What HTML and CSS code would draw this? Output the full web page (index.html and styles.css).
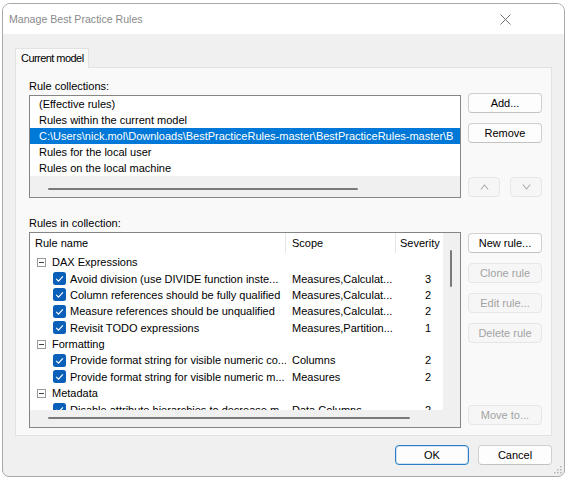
FILE: index.html
```html
<!DOCTYPE html>
<html>
<head>
<meta charset="utf-8">
<title>Manage Best Practice Rules</title>
<link rel="stylesheet" href="styles.css">
</head>
<body>
<div class="window">
  <div class="titlebar">
    <span class="title">Manage Best Practice Rules</span>
    <svg class="close" width="11" height="11" viewBox="0 0 11 11"><path d="M0.5 0.5L10.5 10.5M10.5 0.5L0.5 10.5" stroke="#707070" stroke-width="1" fill="none"/></svg>
  </div>
  <div class="client">
    <div class="tabs"><div class="tab">Current model</div></div>
    <div class="panel">
      <div class="section s1">
        <div class="col">
          <div class="label">Rule collections:</div>
          <div class="listbox">
            <div class="items">
              <div class="item">(Effective rules)</div>
              <div class="item">Rules within the current model</div>
              <div class="item sel">C:\Users\nick.mol\Downloads\BestPracticeRules-master\BestPracticeRules-master\B</div>
              <div class="item">Rules for the local user</div>
              <div class="item">Rules on the local machine</div>
            </div>
            <div class="hscroll"><div class="hthumb"></div></div>
          </div>
        </div>
        <div class="btns b1">
          <button class="btn">Add...</button>
          <button class="btn">Remove</button>
          <div class="arrows">
            <button class="btn" disabled><svg width="9" height="6" viewBox="0 0 9 6"><path d="M0.8 5.5L4.5 1L8.2 5.5" stroke="#a8a8a8" stroke-width="1.1" fill="none"/></svg></button>
            <button class="btn" disabled><svg width="9" height="6" viewBox="0 0 9 6"><path d="M0.8 0.5L4.5 5L8.2 0.5" stroke="#a8a8a8" stroke-width="1.1" fill="none"/></svg></button>
          </div>
        </div>
      </div>
      <div class="section s2">
        <div class="col">
          <div class="label">Rules in collection:</div>
          <div class="tree">
            <div class="tmain">
              <div class="tcontent">
                <div class="hdr">
                  <div class="hc c-name">Rule name</div>
                  <div class="hc c-scope">Scope</div>
                  <div class="hc c-sev">Severity</div>
                </div>
                <div class="rows">
                  <div class="trow group">
                    <svg class="exp" width="9" height="9" viewBox="0 0 9 9"><rect x="0.5" y="0.5" width="8" height="8" fill="#fff" stroke="#9a9a9a"/><path d="M2 4.5H7" stroke="#404040"/></svg>
                    <span class="gname">DAX Expressions</span>
                  </div>
                  <div class="trow rule">
                    <div class="c-name"><svg class="cb" width="13" height="13" viewBox="0 0 13 13"><rect width="13" height="13" rx="2.5" fill="#0a5fb8"/><path d="M3.2 6.8L5.5 9.1L9.9 4.4" stroke="#fff" stroke-width="1.2" fill="none"/></svg><span class="rname">Avoid division (use DIVIDE function inste...</span></div>
                    <div class="c-scope">Measures,Calculat...</div>
                    <div class="c-sev">3</div>
                  </div>
                  <div class="trow rule">
                    <div class="c-name"><svg class="cb" width="13" height="13" viewBox="0 0 13 13"><rect width="13" height="13" rx="2.5" fill="#0a5fb8"/><path d="M3.2 6.8L5.5 9.1L9.9 4.4" stroke="#fff" stroke-width="1.2" fill="none"/></svg><span class="rname">Column references should be fully qualified</span></div>
                    <div class="c-scope">Measures,Calculat...</div>
                    <div class="c-sev">2</div>
                  </div>
                  <div class="trow rule">
                    <div class="c-name"><svg class="cb" width="13" height="13" viewBox="0 0 13 13"><rect width="13" height="13" rx="2.5" fill="#0a5fb8"/><path d="M3.2 6.8L5.5 9.1L9.9 4.4" stroke="#fff" stroke-width="1.2" fill="none"/></svg><span class="rname">Measure references should be unqualified</span></div>
                    <div class="c-scope">Measures,Calculat...</div>
                    <div class="c-sev">2</div>
                  </div>
                  <div class="trow rule">
                    <div class="c-name"><svg class="cb" width="13" height="13" viewBox="0 0 13 13"><rect width="13" height="13" rx="2.5" fill="#0a5fb8"/><path d="M3.2 6.8L5.5 9.1L9.9 4.4" stroke="#fff" stroke-width="1.2" fill="none"/></svg><span class="rname">Revisit TODO expressions</span></div>
                    <div class="c-scope">Measures,Partition...</div>
                    <div class="c-sev">1</div>
                  </div>
                  <div class="trow group">
                    <svg class="exp" width="9" height="9" viewBox="0 0 9 9"><rect x="0.5" y="0.5" width="8" height="8" fill="#fff" stroke="#9a9a9a"/><path d="M2 4.5H7" stroke="#404040"/></svg>
                    <span class="gname">Formatting</span>
                  </div>
                  <div class="trow rule">
                    <div class="c-name"><svg class="cb" width="13" height="13" viewBox="0 0 13 13"><rect width="13" height="13" rx="2.5" fill="#0a5fb8"/><path d="M3.2 6.8L5.5 9.1L9.9 4.4" stroke="#fff" stroke-width="1.2" fill="none"/></svg><span class="rname">Provide format string for visible numeric co...</span></div>
                    <div class="c-scope">Columns</div>
                    <div class="c-sev">2</div>
                  </div>
                  <div class="trow rule">
                    <div class="c-name"><svg class="cb" width="13" height="13" viewBox="0 0 13 13"><rect width="13" height="13" rx="2.5" fill="#0a5fb8"/><path d="M3.2 6.8L5.5 9.1L9.9 4.4" stroke="#fff" stroke-width="1.2" fill="none"/></svg><span class="rname">Provide format string for visible numeric m...</span></div>
                    <div class="c-scope">Measures</div>
                    <div class="c-sev">2</div>
                  </div>
                  <div class="trow group">
                    <svg class="exp" width="9" height="9" viewBox="0 0 9 9"><rect x="0.5" y="0.5" width="8" height="8" fill="#fff" stroke="#9a9a9a"/><path d="M2 4.5H7" stroke="#404040"/></svg>
                    <span class="gname">Metadata</span>
                  </div>
                  <div class="trow rule">
                    <div class="c-name"><svg class="cb" width="13" height="13" viewBox="0 0 13 13"><rect width="13" height="13" rx="2.5" fill="#0a5fb8"/><path d="M3.2 6.8L5.5 9.1L9.9 4.4" stroke="#fff" stroke-width="1.2" fill="none"/></svg><span class="rname">Disable attribute hierarchies to decrease m...</span></div>
                    <div class="c-scope">Data Columns</div>
                    <div class="c-sev">2</div>
                  </div>
                </div>
              </div>
              <div class="vscroll"><div class="vthumb"></div></div>
            </div>
            <div class="hscroll2"><div class="hthumb2"></div></div>
          </div>
        </div>
        <div class="btns b2">
          <button class="btn">New rule...</button>
          <button class="btn" disabled>Clone rule</button>
          <button class="btn" disabled>Edit rule...</button>
          <button class="btn" disabled>Delete rule</button>
          <button class="btn move" disabled>Move to...</button>
        </div>
      </div>
    </div>
    <div class="footer">
      <button class="btn default">OK</button>
      <button class="btn">Cancel</button>
    </div>
  </div>
  <svg class="grip" width="8" height="8" viewBox="0 0 8 8"><g fill="#b4b4b4"><rect x="6" y="0" width="1.5" height="1.5"/><rect x="3" y="3" width="1.5" height="1.5"/><rect x="6" y="3" width="1.5" height="1.5"/><rect x="0" y="6" width="1.5" height="1.5"/><rect x="3" y="6" width="1.5" height="1.5"/><rect x="6" y="6" width="1.5" height="1.5"/></g></svg>
</div>
</body>
</html>
```
FILE: styles.css
```css
html, body {
  margin: 0;
  padding: 0;
  background: #ffffff;
}
body {
  font-family: "Liberation Sans", Arial, sans-serif;
  font-size: 11px;
  color: #000;
  overflow: hidden;
}
.window {
  position: relative;
  margin: 3px 0 0 2px;
  width: 563px;
  height: 474px;
  box-sizing: border-box;
  border: 1px solid #a9a9a9;
  border-radius: 8px 8px 7px 7px;
  background: #f0f0f0;
  display: flex;
  flex-direction: column;
  overflow: hidden;
}
.titlebar {
  flex: none;
  height: 30px;
  background: #ffffff;
  display: flex;
  align-items: center;
  justify-content: space-between;
  padding: 0 53px 0 6px;
}
.title {
  font-size: 10.6px;
  color: #8a8a8a;
}
.client {
  flex: 1;
  padding: 14px 12px 0 12px;
  display: flex;
  flex-direction: column;
}
.tabs {
  display: flex;
  height: 19px;
}
.tab {
  width: 74px;
  height: 20px;
  box-sizing: border-box;
  border: 1px solid #e2e2e2;
  border-bottom: none;
  background: #f9f9f9;
  padding-left: 5px;
  line-height: 18px;
  letter-spacing: -0.55px;
  position: relative;
  z-index: 1;
}
.panel {
  height: 369px;
  box-sizing: border-box;
  border: 1px solid #e2e2e2;
  background: #f9f9f9;
  padding: 10px 9px 7px 13px;
  display: flex;
  flex-direction: column;
  gap: 17px;
}
.section {
  display: flex;
  gap: 7px;
}
.s1 { height: 120px; }
.s2 { height: 213px; }
.col {
  width: 432px;
  display: flex;
  flex-direction: column;
}
.label {
  height: 17px;
  line-height: 16px;
  flex: none;
}
.listbox {
  height: 103px;
  box-sizing: border-box;
  border: 1px solid #858585;
  background: #fff;
  display: flex;
  flex-direction: column;
  overflow: hidden;
}
.items {
  height: 80px;
  flex: none;
}
.item {
  height: 16px;
  line-height: 16px;
  padding-left: 9px;
  white-space: nowrap;
  overflow: hidden;
}
.item.sel {
  background: #0078d7;
  color: #fff;
}
.hscroll {
  flex: 1;
  background: #f0f0f0;
  padding: 12px 0 0 18px;
  box-sizing: border-box;
}
.hthumb {
  width: 310px;
  height: 2px;
  background: #7a7a7a;
  border-radius: 1px;
}
.btns {
  width: 74px;
  display: flex;
  flex-direction: column;
  gap: 10px;
}
.b1 { padding-top: 15px; }
.b2 { padding-top: 18px; }
.arrows {
  margin-top: auto;
  margin-bottom: 1px;
  display: flex;
  justify-content: space-between;
}
.arrows .btn {
  width: 32px;
  display: flex;
  align-items: center;
  justify-content: center;
}
.btn {
  font-family: "Liberation Sans", Arial, sans-serif;
  font-size: 11px;
  width: 74px;
  height: 20px;
  box-sizing: border-box;
  border: 1px solid #d0d0d0;
  border-bottom-color: #c2c2c2;
  border-radius: 4px;
  background: #fdfdfd;
  color: #000;
  padding: 0;
  margin: 0;
  flex: none;
}
.btn:disabled {
  background: #f6f6f6;
  border-color: #e6e6e6;
  color: #a3a3a3;
}
.move {
  margin-top: auto;
  margin-bottom: 3px;
}
.tree {
  height: 196px;
  box-sizing: border-box;
  border: 1px solid #858585;
  background: #f0f0f0;
  display: flex;
  flex-direction: column;
  overflow: hidden;
}
.tmain {
  height: 177px;
  display: flex;
  flex: none;
}
.tcontent {
  width: 413px;
  background: #fff;
  display: flex;
  flex-direction: column;
}
.hdr {
  height: 21px;
  display: flex;
  flex: none;
}
.hc {
  height: 20px;
  line-height: 20px;
  box-sizing: border-box;
}
.hdr .c-name {
  width: 256px;
  padding-left: 5px;
  border-right: 1px solid #e5e5e5;
}
.hdr .c-scope {
  width: 110px;
  padding-left: 6px;
  border-right: 1px solid #e5e5e5;
}
.hdr .c-sev {
  width: 47px;
  padding-left: 4px;
}
.rows {
  flex: 1;
  overflow: hidden;
}
.trow {
  height: 16.375px;
  display: flex;
  align-items: center;
  white-space: nowrap;
}
.group .exp {
  margin-left: 7px;
  flex: none;
}
.gname {
  margin-left: 6px;
}
.rule .c-name {
  width: 256px;
  display: flex;
  align-items: center;
  overflow: hidden;
  box-sizing: border-box;
  padding-left: 23px;
}
.rule .cb {
  flex: none;
}
.rname {
  margin-left: 4px;
}
.rule .c-scope {
  width: 110px;
  padding-left: 6px;
  box-sizing: border-box;
  overflow: hidden;
}
.rule .c-sev {
  width: 47px;
  text-align: right;
  padding-right: 12px;
  box-sizing: border-box;
}
.vscroll {
  width: 17px;
  background: #f0f0f0;
  padding: 17px 0 0 7px;
  box-sizing: border-box;
}
.vthumb {
  width: 2px;
  height: 37px;
  background: #7a7a7a;
  border-radius: 1px;
}
.hscroll2 {
  flex: 1;
  padding: 7px 0 0 18px;
  box-sizing: border-box;
}
.hthumb2 {
  width: 362px;
  height: 2px;
  background: #7a7a7a;
  border-radius: 1px;
}
.footer {
  display: flex;
  justify-content: flex-end;
  gap: 9px;
  margin-top: 9px;
}
.btn.default {
  border: 1px solid #2d7cc4;
  box-shadow: inset 0 0 0 1px #cfe3f5;
}
.grip {
  position: absolute;
  right: 2px;
  bottom: 2px;
}
```
